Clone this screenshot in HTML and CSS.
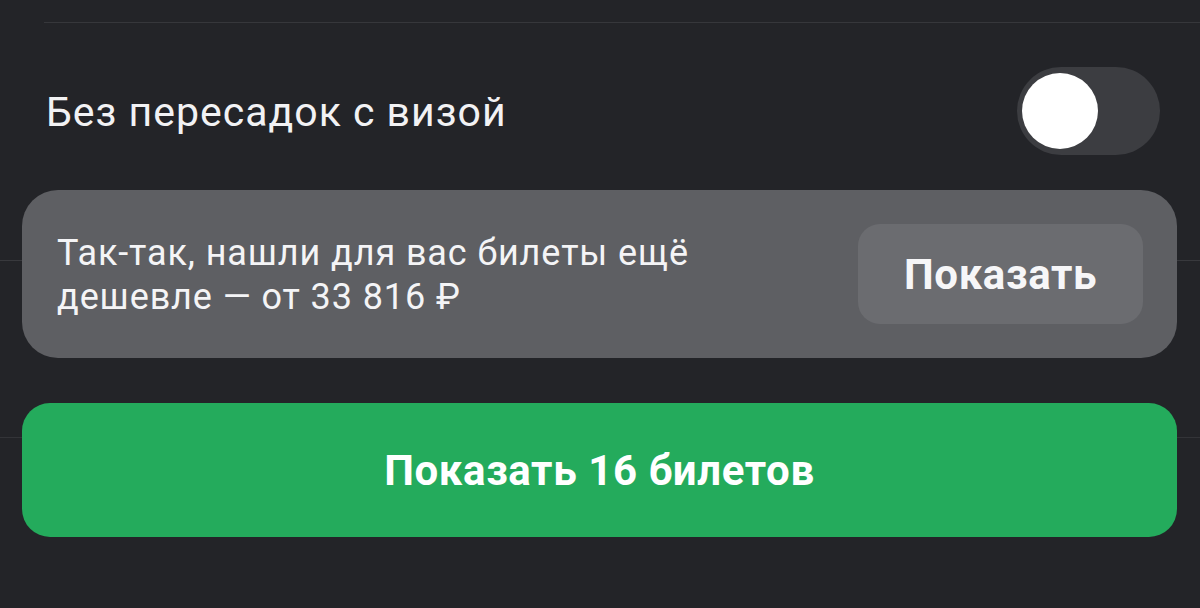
FILE: index.html
```html
<!DOCTYPE html>
<html lang="ru">

<head>
  <meta charset="UTF-8">
  <meta name="viewport" content="width=device-width, initial-scale=1.0">
  <title>Фильтры</title>
  <link rel="stylesheet" href="styles.css">
</head>

<body>
  <div class="filters">
    <div class="filter-row">
      <span class="filter-label">Без пересадок с визой</span>
      <div class="toggle">
        <div class="toggle-knob"></div>
      </div>
    </div>
  </div>

  <div class="footer">
    <div class="offer-card">
      <p class="offer-text">Так-так, нашли для вас билеты ещё<br>дешевле — от 33&nbsp;816 ₽</p>
      <button class="offer-btn">Показать</button>
    </div>
    <button class="main-btn">Показать 16 билетов</button>
  </div>
</body>

</html>
```

FILE: styles.css
```css
body {
  font-family: 'Roboto', 'Inter', sans-serif;
  margin: 0;
  padding: 0;
  background-color: #232428;
  color: #f2f2f4;
  width: 1200px;
  height: 608px;
  overflow: hidden;
}

.filters {
  padding-top: 22px;
}

.filter-row {
  display: flex;
  align-items: center;
  justify-content: space-between;
  margin-left: 44px;
  padding: 44px 40px 0 2px;
  border-top: 1px solid #36373b;
}

.filter-label {
  font-size: 41px;
  letter-spacing: 1px;
  margin-top: 2px;
}

.toggle {
  width: 143px;
  height: 88px;
  border-radius: 44px;
  background-color: #3c3d41;
  display: flex;
  align-items: center;
  padding-left: 5px;
  box-sizing: border-box;
}

.toggle-knob {
  width: 76px;
  height: 76px;
  border-radius: 50%;
  background-color: #fff;
}

.footer {
  padding: 35px 23px 0 22px;
  background: linear-gradient(#38393d, #38393d) 0 105px / 100% 1px no-repeat,
    linear-gradient(#333438, #333438) 0 282px / 100% 1px no-repeat;
}

.offer-card {
  height: 168px;
  box-sizing: border-box;
  border-radius: 36px;
  background-color: #5e5f63;
  display: flex;
  align-items: center;
  justify-content: space-between;
  padding: 0 34px 0 35px;
}

.offer-text {
  margin: 0 0 -2px;
  font-size: 36px;
  line-height: 44px;
  letter-spacing: 0.9px;
  color: #f4f4f6;
}

.offer-btn {
  width: 285px;
  height: 100px;
  border: none;
  border-radius: 22px;
  background-color: #6b6c70;
  color: #f6f6f8;
  font-family: inherit;
  font-size: 42px;
  font-weight: 700;
  letter-spacing: 0.6px;
}

.main-btn {
  display: block;
  width: 100%;
  height: 134px;
  margin-top: 45px;
  border: none;
  border-radius: 28px;
  background-color: #24ab5c;
  color: #fff;
  font-family: inherit;
  font-size: 42px;
  font-weight: 700;
  letter-spacing: 0.6px;
}
```
